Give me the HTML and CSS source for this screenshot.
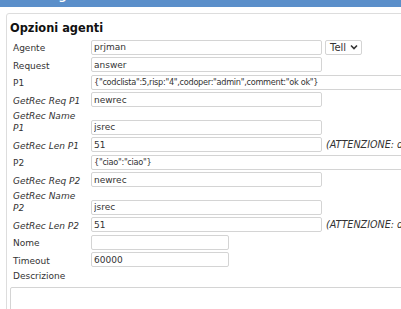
FILE: index.html
```html
<!DOCTYPE html>
<html lang="it">
<head>
  <meta charset="UTF-8">
  <title>Opzioni agenti</title>
  <link rel="stylesheet" href="styles.css">
</head>
<body>

<div class="topbar"><span class="topbar-title">Agenti</span></div>

<div class="panel">
  <div class="panel-title">Opzioni agenti</div>

  <div class="form">
    <label>Agente</label>
    <input type="text" value="prjman">
    <span class="select">Tell
      <svg width="8" height="6" viewBox="0 0 8 6"><path d="M1 1.5 L4 4.5 L7 1.5" fill="none" stroke="#333" stroke-width="1.6"/></svg>
    </span>

    <label>Request</label>
    <input type="text" value="answer">

    <label>P1</label>
    <input type="text" class="wide" value='{"codclista":5,risp:"4",codoper:"admin",comment:"ok ok"}'>

    <label class="it">GetRec Req P1</label>
    <input type="text" value="newrec">

    <label class="it">GetRec Name P1</label>
    <input type="text" value="jsrec">

    <label class="it">GetRec Len P1</label>
    <input type="text" value="51">
    <span class="note">(ATTENZIONE: dimensione in byte del campo)</span>

    <label>P2</label>
    <input type="text" class="wide" value='{"ciao":"ciao"}'>

    <label class="it">GetRec Req P2</label>
    <input type="text" value="newrec">

    <label class="it">GetRec Name P2</label>
    <input type="text" value="jsrec">

    <label class="it">GetRec Len P2</label>
    <input type="text" value="51">
    <span class="note">(ATTENZIONE: dimensione in byte del campo)</span>

    <label>Nome</label>
    <input type="text" class="short" value="">

    <label>Timeout</label>
    <input type="text" class="short" value="60000">
  </div>

  <div class="desc-label">Descrizione</div>
  <textarea class="desc"></textarea>
</div>

</body>
</html>
```

FILE: styles.css
```css
body {
  margin: 0;
  font-family: "DejaVu Sans", Verdana, sans-serif;
  font-size: 9px;
  color: #333;
  background: white;
  overflow: hidden;
}

.topbar {
  height: 7px;
  background: #5b8fca;
  overflow: hidden;
  padding-left: 50px;
}

.topbar-title {
  display: block;
  margin-top: -9px;
  color: white;
  font-weight: bold;
  font-size: 11px;
  line-height: 11px;
}

.panel {
  width: 560px;
  margin: 6px 0 0 6px;
  padding: 8px 3px 0;
  border: 1px solid #ddd;
  border-radius: 3px;
}

.panel-title {
  font-weight: bold;
  font-size: 11.4px;
  line-height: 13px;
  color: #111;
  margin-bottom: 4.5px;
}

.form {
  display: grid;
  grid-template-columns: 74px 231px 220px;
  column-gap: 4px;
  row-gap: 2.5px;
  align-items: end;
  padding-left: 3px;
}

.form label {
  grid-column: 1;
  line-height: 12.5px;
}

.form label.it {
  font-style: italic;
}

.form input {
  grid-column: 2;
  height: 15px;
  box-sizing: border-box;
  padding: 0 2px;
  border: 1px solid #d4d4d4;
  border-radius: 2px;
  font-family: "DejaVu Sans", Verdana, sans-serif;
  font-size: 9px;
  color: #333;
  outline: none;
}

.form input.wide {
  grid-column: 2 / 4;
  font-size: 8.2px;
  letter-spacing: -0.3px;
}

.form input.short {
  width: 138px;
}

.select {
  justify-self: start;
  display: flex;
  align-items: center;
  gap: 4px;
  height: 15px;
  box-sizing: border-box;
  padding: 0 3px 0 4px;
  margin-left: -1px;
  border: 1px solid #d4d4d4;
  border-radius: 2px;
  font-size: 10px;
}

.note {
  font-style: italic;
  font-size: 9.6px;
  white-space: nowrap;
  line-height: 15px;
}

.desc-label {
  padding-left: 3px;
  margin-top: 3px;
  line-height: 12.5px;
}

.desc {
  display: block;
  width: 100%;
  height: 40px;
  box-sizing: border-box;
  margin-top: 4px;
  border: 1px solid #d4d4d4;
  border-radius: 2px;
  resize: none;
}
```
